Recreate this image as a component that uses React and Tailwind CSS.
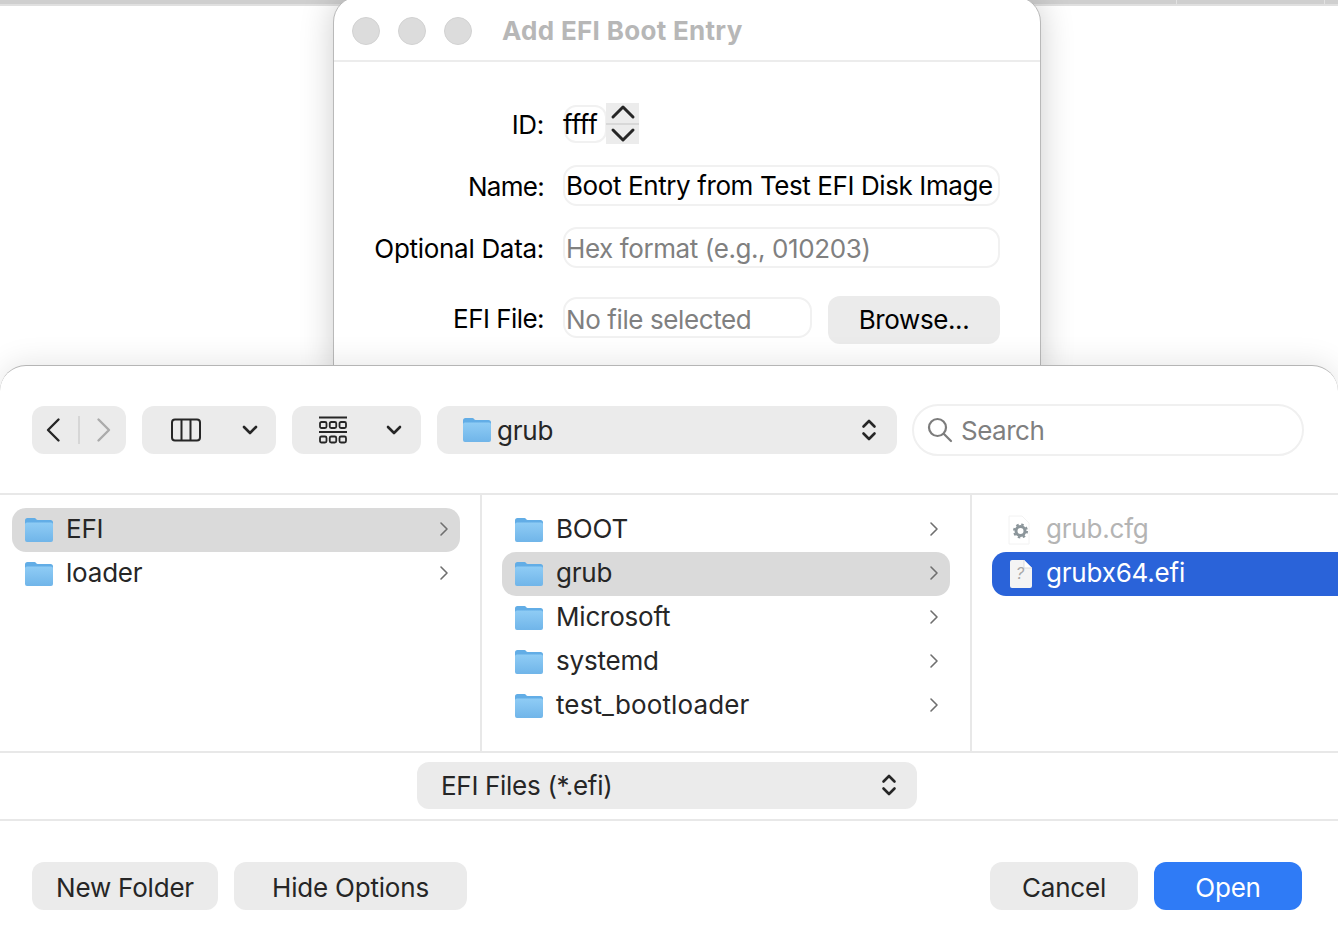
import React from "react";

const FONT = "font-['Inter','Liberation_Sans',sans-serif]";

function Folder({ className = "w-[30px] h-[26px]" }) {
  return (
    <svg viewBox="0 0 30 26" className={className}>
      <defs>
        <linearGradient id="fg" x1="0" y1="0" x2="0" y2="1">
          <stop offset="0" stopColor="#8fccf5" />
          <stop offset="1" stopColor="#70b5e9" />
        </linearGradient>
      </defs>
      <path d="M1 3.500A2.500 2.500 0 0 1 3.500 1h7c1.300 0 1.800 2 3.200 2H26.500A2.500 2.500 0 0 1 29 5.500V12H1Z" fill="#62ade6" />
      <path d="M1 7.500A2 2 0 0 1 3 5.500H27A2 2 0 0 1 29 7.500V23A2 2 0 0 1 27 25H3A2 2 0 0 1 1 23Z" fill="url(#fg)" />
    </svg>
  );
}

function ChevronRight() {
  return (
    <svg viewBox="0 0 10 16" className="w-[10px] h-[16px]" fill="none" stroke="#6f6f6f" strokeWidth="1.600" strokeLinecap="round" strokeLinejoin="round">
      <path d="M2 2l6 6-6 6" />
    </svg>
  );
}

function ChevronDown() {
  return (
    <svg viewBox="0 0 16 10" className="w-[16px] h-[10px]" fill="none" stroke="#262626" strokeWidth="2.600" strokeLinecap="round" strokeLinejoin="round">
      <path d="M2 2l6 6 6-6" />
    </svg>
  );
}

function UpDown() {
  return (
    <svg viewBox="0 0 16 24" className="w-[16px] h-[24px]" fill="none" stroke="#262626" strokeWidth="2.600" strokeLinecap="round" strokeLinejoin="round">
      <path d="M2.500 8.500L8 3l5.500 5.500M2.500 15.500L8 21l5.500-5.500" />
    </svg>
  );
}

function Row({ label, selected, hasChevron = true, muted, blue, icon, rounded = "rounded-[14px]", labelClass = "" }) {
  const bg = blue ? "bg-[#2a63d9]" : selected ? "bg-[#dadada]" : "";
  const color = blue ? "text-white" : muted ? "text-[#b4b4b4]" : "text-[#262626]";
  return (
    <div className={`h-[44px] flex items-center ${rounded} ${bg}`}>
      <span className="w-[54px] pl-[12px] flex items-center shrink-0">{icon || <Folder />}</span>
      <span className={`flex-1 text-[26px] pb-[4px] ${color} ${labelClass}`}>{label}</span>
      {hasChevron && (
        <span className="pr-[11px] pb-[2px] flex items-center">
          <ChevronRight />
        </span>
      )}
    </div>
  );
}

function ToolButton({ className = "", children }) {
  return <div className={`h-[48px] rounded-[12px] bg-[#ebebeb] flex items-center ${className}`}>{children}</div>;
}

function FormRow({ label, className = "", labelClass = "pt-[2px] tracking-[-0.3px]", children }) {
  return (
    <div className={`flex items-center ${className}`}>
      <span className={`w-[210px] text-right text-[26px] text-black shrink-0 ${labelClass}`}>{label}</span>
      <div className="ml-[19px] flex items-center flex-1">{children}</div>
    </div>
  );
}

function ActionButton({ className = "", children }) {
  return (
    <button className={`h-[48px] pt-[2px] rounded-[12px] bg-[#ebebeb] text-[26px] text-[#262626] flex items-center justify-center ${className}`}>
      {children}
    </button>
  );
}

export default function App() {
  return (
    <div className={`w-[1338px] h-[936px] overflow-hidden bg-white flex flex-col ${FONT} tracking-[-0.2px]`}>
      <div className="h-[365px] shrink-0 overflow-hidden">
        <div className="h-[6px] flex border-b-2 border-[#e0e0e0] bg-[#cfcfcf]">
          <div className="w-[1177px] border-r border-[#e2e2e2]" />
          <div className="w-[148px] border-r border-[#e2e2e2]" />
        </div>
        <div className="ml-[333px] w-[708px] h-[380px] -mt-[10px] bg-white rounded-t-[26px] border border-[#b9b9b9] shadow-[0_0_34px_rgba(0,0,0,0.2)]">
          <div className="h-[65px] border-b-2 border-[#ececec] flex items-center pl-[18px] pt-[4px]">
            <span className="w-[28px] h-[28px] rounded-full bg-[#dcdcdc] border border-[#d2d2d2]" />
            <span className="w-[28px] h-[28px] rounded-full bg-[#dcdcdc] border border-[#d2d2d2] ml-[18px]" />
            <span className="w-[28px] h-[28px] rounded-full bg-[#dcdcdc] border border-[#d2d2d2] ml-[18px]" />
            <span className="ml-[30px] text-[26px] font-bold text-[#b7b7b7] tracking-[0.3px]">Add EFI Boot Entry</span>
          </div>
          <FormRow label="ID:" className="mt-[41px] h-[41px]">
            <div className="w-[43px] h-[38px] ml-[1px] rounded-[12px] border-2 border-[#f1f1f1] text-[26px] text-black flex items-center pt-[2px]">
              <span className="-ml-[3px]">ffff</span>
            </div>
            <div className="w-[33px] h-[41px] -ml-[1px] bg-[#ececec] flex flex-col items-center justify-between">
              <svg viewBox="0 0 26 18" className="w-[26px] h-[18px]" fill="none" stroke="#262626" strokeWidth="3" strokeLinecap="round" strokeLinejoin="round">
                <path d="M3 14L13 4l10 10" />
              </svg>
              <div className="w-full h-[2px] bg-[#d8d8d8]" />
              <svg viewBox="0 0 26 18" className="w-[26px] h-[18px]" fill="none" stroke="#262626" strokeWidth="3" strokeLinecap="round" strokeLinejoin="round">
                <path d="M3 4l10 10L23 4" />
              </svg>
            </div>
          </FormRow>
          <FormRow label="Name:" labelClass="pt-[2px] tracking-[-0.7px]" className="mt-[21px] h-[41px]">
            <div className="w-[437px] h-[41px] rounded-[14px] border-2 border-[#f1f1f1] text-[26px] text-black flex items-center pl-[1px] whitespace-nowrap tracking-[-0.4px]">Boot Entry from Test EFI Disk Image</div>
          </FormRow>
          <FormRow label="Optional Data:" className="mt-[21px] h-[41px]">
            <div className="w-[437px] h-[41px] rounded-[14px] border-2 border-[#f1f1f1] text-[26px] text-[#808080] flex items-center pl-[1px] pt-[2px] tracking-[-0.4px]">Hex format (e.g., 010203)</div>
          </FormRow>
          <FormRow label="EFI File:" className="mt-[28px] h-[48px]" labelClass="pb-[4px] tracking-[-0.55px]">
            <div className="w-[249px] h-[41px] mb-[6px] rounded-[14px] border-2 border-[#f1f1f1] text-[26px] text-[#808080] flex items-center pl-[1px] pt-[4px] tracking-[-0.4px]">No file selected</div>
            <button className="ml-[16px] w-[172px] h-[48px] pb-[2px] rounded-[12px] bg-[#ebebeb] text-[26px] text-black flex items-center justify-center tracking-[-0.4px]">Browse...</button>
          </FormRow>
        </div>
      </div>

      <div className="flex-1 bg-white rounded-t-[26px] border-t border-[#b5b5b5] flex flex-col relative shadow-[0_-2px_30px_rgba(0,0,0,0.1)]">
        <div className="h-[129px] pt-[1px] border-b-2 border-[#e8e8e8] flex items-center px-[32px] shrink-0">
          <ToolButton className="w-[94px] pl-[13px]">
            <svg viewBox="0 0 16 26" className="w-[16px] h-[26px]" fill="none" stroke="#262626" strokeWidth="2.400" strokeLinecap="round" strokeLinejoin="round">
              <path d="M13.500 2.500L3 13l10.500 10.500" />
            </svg>
            <span className="w-[2px] h-[28px] bg-[#d6d6d6] ml-[17px]" />
            <svg viewBox="0 0 16 26" className="w-[16px] h-[26px] ml-[16px]" fill="none" stroke="#ababab" strokeWidth="2.400" strokeLinecap="round" strokeLinejoin="round">
              <path d="M2.500 2.500L13 13 2.500 23.500" />
            </svg>
          </ToolButton>
          <ToolButton className="w-[134px] ml-[16px] pl-[29px]">
            <svg viewBox="0 0 30 24" className="w-[30px] h-[24px]" fill="none" stroke="#262626" strokeWidth="2">
              <rect x="1" y="1.500" width="28" height="21" rx="3" />
              <path d="M10.500 1.500v21M19.500 1.500v21" />
            </svg>
            <span className="ml-[41px] flex">
              <ChevronDown />
            </span>
          </ToolButton>
          <ToolButton className="w-[129px] ml-[16px] pl-[27px]">
            <svg viewBox="0 0 28 28" className="w-[28px] h-[28px]" fill="none" stroke="#262626" strokeWidth="1.800">
              <path d="M0 1.500h28M0 16h28" />
              <rect x="1" y="6" width="6.500" height="6" rx="1.500" />
              <rect x="10.750" y="6" width="6.500" height="6" rx="1.500" />
              <rect x="20.500" y="6" width="6.500" height="6" rx="1.500" />
              <rect x="1" y="20.500" width="6.500" height="6" rx="1.500" />
              <rect x="10.750" y="20.500" width="6.500" height="6" rx="1.500" />
              <rect x="20.500" y="20.500" width="6.500" height="6" rx="1.500" />
            </svg>
            <span className="ml-[39px] flex">
              <ChevronDown />
            </span>
          </ToolButton>
          <ToolButton className="w-[460px] ml-[16px] pl-[25px] pr-[20px]">
            <Folder />
            <span className="ml-[5px] text-[26px] text-[#262626] flex-1">grub</span>
            <UpDown />
          </ToolButton>
          <div className="w-[392px] h-[52px] ml-[15px] rounded-full border-2 border-[#f0f0f0] flex items-center pl-[13px]">
            <svg viewBox="0 0 26 26" className="w-[26px] h-[26px]" fill="none" stroke="#7c7c7c" strokeWidth="2.200" strokeLinecap="round">
              <circle cx="10.500" cy="10.500" r="8.500" />
              <path d="M17 17l7 7" />
            </svg>
            <span className="ml-[8px] text-[26px] text-[#7f7f7f] tracking-[-0.5px]">Search</span>
          </div>
        </div>

        <div className="h-[258px] border-b-2 border-[#e8e8e8] flex shrink-0">
          <div className="w-[482px] border-r-2 border-[#e8e8e8] pt-[13px] pl-[12px] pr-[20px]">
            <Row label="EFI" selected />
            <Row label="loader" />
          </div>
          <div className="w-[490px] border-r-2 border-[#e8e8e8] pt-[13px] pl-[20px] pr-[20px]">
            <Row label="BOOT" />
            <Row label="grub" selected />
            <Row label="Microsoft" />
            <Row label="systemd" />
            <Row label="test_bootloader" labelClass="tracking-[0.12px]" />
          </div>
          <div className="flex-1 pt-[13px] pl-[20px]">
            <Row
              label="grub.cfg"
              muted
              hasChevron={false}
              icon={
                <svg viewBox="0 0 24 30" className="w-[24px] h-[30px] ml-[3px]">
                  <path d="M2 1h13l7 7v21H2Z" fill="#ffffff" stroke="#f2f2f2" strokeWidth="1" />
                  <circle cx="13.500" cy="16" r="4.500" fill="none" stroke="#8b959a" strokeWidth="3" />
                  <circle cx="13.500" cy="16" r="6.500" fill="none" stroke="#8b959a" strokeWidth="2" strokeDasharray="2.500 2.600" />
                </svg>
              }
            />
            <Row
              label="grubx64.efi"
              blue
              hasChevron={false}
              rounded="rounded-l-[14px]"
              icon={
                <svg viewBox="0 0 24 30" className="w-[24px] h-[30px] ml-[5px]">
                  <path d="M3 1h12l8 8v18a2 2 0 0 1-2 2H3a2 2 0 0 1-2-2V3a2 2 0 0 1 2-2Z" fill="#f4f4f4" />
                  <path d="M15 1v8h8" fill="#ffffff" stroke="#d4d4d4" strokeWidth="0.800" />
                  <text x="7" y="20" fontSize="16" fill="#a8a8a8" fontFamily="Inter" fontStyle="italic">?</text>
                </svg>
              }
            />
          </div>
        </div>

        <div className="h-[68px] pb-[2px] border-b-2 border-[#e8e8e8] flex items-center pl-[417px] shrink-0">
          <div className="w-[500px] h-[47px] rounded-[12px] bg-[#ebebeb] flex items-center pl-[24px] pr-[20px]">
            <span className="flex-1 text-[26px] text-[#262626] tracking-[-0.3px]">EFI Files (*.efi)</span>
            <UpDown />
          </div>
        </div>

        <div className="flex-1 flex items-start pt-[41px] pl-[32px]">
          <ActionButton className="w-[186px]">New Folder</ActionButton>
          <ActionButton className="w-[233px] ml-[16px]">Hide Options</ActionButton>
          <ActionButton className="w-[148px] ml-[523px]">Cancel</ActionButton>
          <button className="w-[148px] h-[48px] pt-[2px] ml-[16px] rounded-[12px] bg-[#2f7bf6] text-[26px] text-white flex items-center justify-center">Open</button>
        </div>
      </div>
    </div>
  );
}
